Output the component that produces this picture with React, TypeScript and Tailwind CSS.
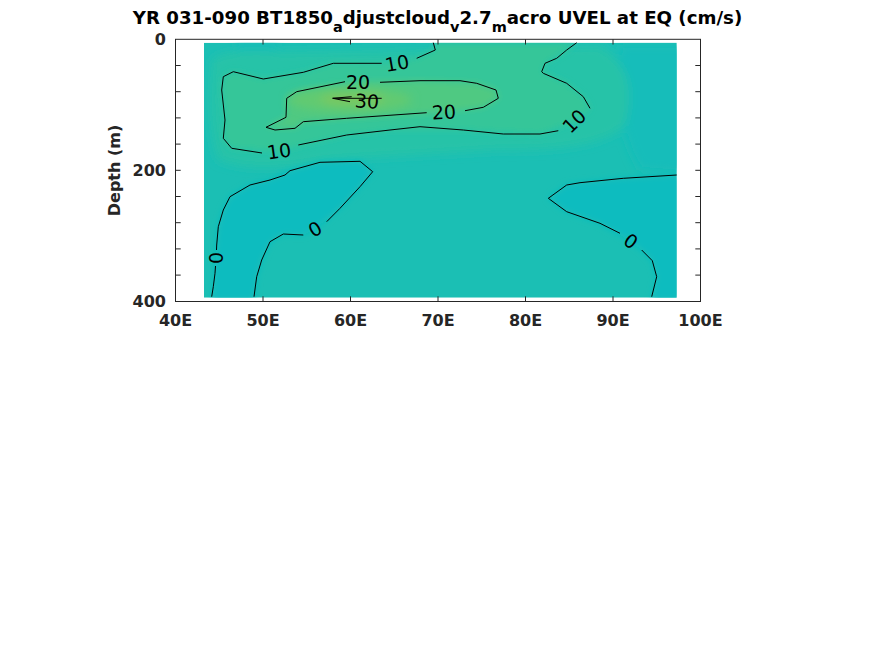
const FONT = "'DejaVu Sans', 'Liberation Sans', sans-serif"

const X_TICKS = [40, 50, 60, 70, 80, 90, 100]
const xPos = (lon: number) => 175.5 + (lon - 40) * 8.75
const yPos = (depth: number) => 39.3 + depth * 0.655

// contour lines traced from the model field (page coordinates)
const TEN_LINE = [
  'M433.3 42.7 L435.3 50 L416.7 58.3',
  'M381.7 63.3 L333.3 63.3 L303.3 72.3 L263.3 79 L233.3 71.7 L223.3 76.7 L221.7 90 L225 120 L223.3 138.3 L231.7 148.3 L262 153',
  'M298.3 145 L346.7 135 L390 130 L420 126.7 L463.3 130 L503.3 134 L540 134 L558.3 130.7',
  'M590 108.3 L583.3 96.7 L566.7 83.3 L543.3 73.3 L541.7 71.7 L545 63.3 L556.7 58.3 L566.7 50 L576.7 42.7',
]
const TWENTY_LINE = [
  'M345 81.7 L296.7 91.7 L286.7 98.3 L286 117.3 L266 127.3 L275 130 L295 128.3 L303.3 121.7 L346.7 118.3 L426.7 112.7',
  'M465 110.7 L483.3 107.3 L498.3 98.3 L496 90 L476.7 83.3 L460 80.7 L420 80.7 L380 82.3',
]
const ZERO_LINE = [
  'M211.7 296.7 L213.3 286.7 L215 273.3 L215.5 266',
  'M216.5 250 L216.7 245 L218.3 226.7 L223.3 210 L230 196.7 L250 185 L270 180 L285 175 L290 170.7 L320 162.3 L360 161.3 L372.7 171.7 L360 186.7 L340 208.3 L326.7 221.7',
  'M303.3 235 L283.3 234 L270 241.7 L261.7 260 L256.7 276.7 L254 296.7',
  'M676.7 175 L623.3 178.3 L580 182.7 L566.7 185 L548.3 198.3 L566.7 211.7 L600 223.3 L620 233.3',
  'M641.7 250 L652.3 260.7 L656.7 276.7 L651.7 296.7',
]

const LABELS: { t: string; x: number; y: number; r: number }[] = [
  { t: '10', x: 397, y: 63, r: -10 },
  { t: '10', x: 279, y: 151, r: -8 },
  { t: '10', x: 574, y: 121, r: -45 },
  { t: '20', x: 358, y: 82, r: 0 },
  { t: '20', x: 444, y: 112, r: -3 },
  { t: '30', x: 367, y: 101, r: 4 },
  { t: '0', x: 216, y: 258, r: -90 },
  { t: '0', x: 315, y: 229, r: -30 },
  { t: '0', x: 631, y: 241, r: 35 },
]

function Sub({ children }: { children: string }) {
  return <span className="relative top-[8px] text-[14.5px] leading-none">{children}</span>
}

export default function App() {
  return (
    <div className="w-[875px] h-[656px] bg-white overflow-hidden" style={{ fontFamily: FONT }}>
      <div className="h-[24px] pt-[8px] text-center text-[18.2px] leading-[20px] font-bold text-black whitespace-nowrap">
        YR 031-090 BT1850<Sub>a</Sub>djustcloud<Sub>v</Sub>2.7<Sub>m</Sub>acro UVEL at EQ (cm/s)
      </div>

      <svg width={875} height={328} viewBox="0 24 875 328" className="block">
        <defs>
          <clipPath id="data">
            <rect x={204} y={42.7} width={472.7} height={255} />
          </clipPath>
          <filter id="soft" filterUnits="userSpaceOnUse" x={150} y={0} width={600} height={360}>
            <feGaussianBlur stdDeviation={5} />
          </filter>
          <filter id="softer" filterUnits="userSpaceOnUse" x={150} y={0} width={600} height={360}>
            <feGaussianBlur stdDeviation={3} />
          </filter>
        </defs>

        {/* filled field */}
        <g clipPath="url(#data)">
          <rect x={204} y={42.7} width={472.7} height={255} fill="#1bbfb4" />
          <g filter="url(#soft)">
            <path d="M620 45 L700 45 L700 175 L640 170 Q610 120 620 45 Z" fill="#16bdba" />
            <path d="M235 40 L280 40 Q275 60 255 62 Q235 58 235 40 Z" fill="#19bdb8" />
            <path d="M212 60 Q225 48 280 52 L600 46 Q640 70 625 125 Q600 152 500 150 L330 160 Q255 175 218 160 Q205 120 212 60 Z" fill="#27c3a8" />
          </g>
          <g filter="url(#softer)">
            <path d="M211.7 300 L213.3 286.7 L216.7 245 L218.3 226.7 L223.3 210 L230 196.7 L250 185 L270 180 L290 170.7 L320 162.3 L360 161.3 L372.7 171.7 L360 186.7 L340 208.3 L315 229 L303.3 235 L283.3 234 L270 241.7 L261.7 260 L256.7 276.7 L254 300 Z" fill="#0bbcbf" />
            <path d="M680 175 L623.3 178.3 L580 182.7 L566.7 185 L548.3 198.3 L566.7 211.7 L600 223.3 L630 241 L641.7 250 L652.3 260.7 L656.7 276.7 L651.7 300 L680 300 Z" fill="#0bbcbf" />
            <path d="M433.3 42.7 L435.3 50 L416.7 58.3 L396 63 L333.3 63.3 L303.3 72.3 L263.3 79 L233.3 71.7 L223.3 76.7 L221.7 90 L225 120 L223.3 138.3 L231.7 148.3 L278 151 L346.7 135 L390 130 L463.3 130 L540 134 L573 122 L590 108.3 L583.3 96.7 L566.7 83.3 L541.7 71.7 L545 63.3 L566.7 50 L576.7 42.7 Z" fill="#35c699" />
            <path d="M358 82 L296.7 91.7 L286.7 98.3 L286 117.3 L266 127.3 L295 128.3 L303.3 121.7 L346.7 118.3 L443 112 L483.3 107.3 L498.3 98.3 L496 90 L476.7 83.3 L420 80.7 Z" fill="#4fc982" />
          </g>
          <g filter="url(#soft)">
            <ellipse cx={350} cy={100} rx={62} ry={12} fill="#62ca71" />
            <ellipse cx={352} cy={99} rx={32} ry={6} fill="#7cc75e" />
          </g>
        </g>

        {/* contour lines */}
        <g fill="none" stroke="#000" strokeWidth={1} strokeLinejoin="round">
          {[...TEN_LINE, ...TWENTY_LINE, ...ZERO_LINE].map((d, i) => (
            <path key={i} d={d} />
          ))}
          <path d="M351.7 96.7 L332.7 98.3 L350 101.7" />
          <path d="M332.7 98.3 L381.7 98.3" />
        </g>
        <g fontSize={19} fill="#000" textAnchor="middle" dominantBaseline="central">
          {LABELS.map((l, i) => (
            <text key={i} x={l.x} y={l.y} transform={`rotate(${l.r} ${l.x} ${l.y})`}>{l.t}</text>
          ))}
        </g>

        {/* axes box and ticks */}
        <g stroke="#262626" strokeWidth={1} fill="none">
          <rect x={175.5} y={39.3} width={525} height={262.2} />
          {X_TICKS.slice(1, -1).map(lon => (
            <g key={lon}>
              <line x1={xPos(lon)} y1={39.3} x2={xPos(lon)} y2={44.5} />
              <line x1={xPos(lon)} y1={301.5} x2={xPos(lon)} y2={296.3} />
            </g>
          ))}
          {Array.from({ length: 9 }, (_, k) => yPos((k + 1) * 40)).map(y => (
            <g key={y}>
              <line x1={175.5} y1={y} x2={180.7} y2={y} />
              <line x1={700.5} y1={y} x2={695.3} y2={y} />
            </g>
          ))}
        </g>

        <g fontSize={16} fontWeight="bold" fill="#262626">
          {X_TICKS.map(lon => (
            <text key={lon} x={xPos(lon)} y={326} textAnchor="middle">{`${lon}E`}</text>
          ))}
          {[0, 200, 400].map(d => (
            <text key={d} x={166} y={yPos(d) + 6} textAnchor="end">{d}</text>
          ))}
          <text x={120} y={170.5} textAnchor="middle" transform="rotate(-90 120 170.5)">Depth (m)</text>
        </g>
      </svg>
    </div>
  )
}
